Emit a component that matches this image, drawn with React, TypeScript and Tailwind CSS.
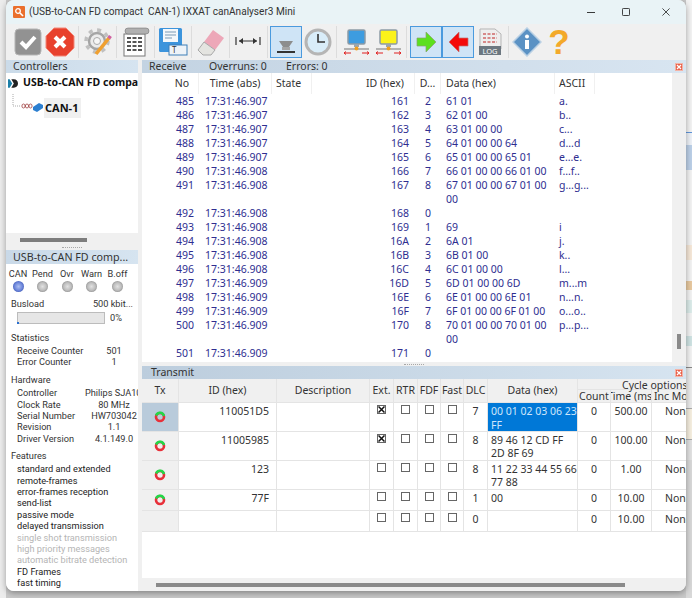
import React from 'react';

const Sep = () => <div className="w-px h-[32px] bg-[#dcdcdc] mx-[2.35px] shrink-0" />;

const ToolBtn = ({ active, children }: { active?: boolean; children: React.ReactNode }) => (
  <div className={`w-[32px] h-[32px] shrink-0 flex items-center justify-center ${active ? 'bg-[#cfe4f6] border border-[#4a9ade]' : ''}`}>
    {children}
  </div>
);

const Icon = ({ children }: { children: React.ReactNode }) => (
  <svg width="30" height="30" viewBox="0 0 30 30">{children}</svg>
);

const NetIcon = ({ face }: { face: string }) => (
  <Icon>
    <rect x="7" y="3" width="17" height="14" rx="1.5" fill={face} stroke="#8c9aa5" strokeWidth="1.5" />
    <rect x="13" y="17" width="5" height="3" fill="#9aa5ad" />
    <line x1="3" y1="22" x2="28" y2="22" stroke="#777" strokeWidth="1" />
    <circle cx="15.5" cy="21.5" r="2" fill="#f0a020" />
    <path d="M3 26h7M3 26l2-1.5M3 26l2 1.5M21 26h7M28 26l-2-1.5M28 26l-2 1.5" stroke="#e02020" strokeWidth="1" fill="none" />
  </Icon>
);

const Toolbar = () => (
  <div className="h-[36px] bg-[#f0f0f0] flex items-center pl-[6px] shrink-0">
    <ToolBtn>
      <Icon>
        <rect x="2" y="2" width="26" height="26" rx="4" fill="#929292" stroke="#b5b5b5" />
        <path d="M8 15l5 5 9-10" stroke="#fff" strokeWidth="4" fill="none" />
      </Icon>
    </ToolBtn>
    <ToolBtn>
      <Icon>
        <path d="M9 1h12l8 8v12l-8 8H9l-8-8V9z" fill="#e8412d" stroke="#f3897a" strokeWidth="1" />
        <path d="M10 10l10 10M20 10L10 20" stroke="#fff" strokeWidth="4" />
      </Icon>
    </ToolBtn>
    <Sep />
    <ToolBtn>
      <Icon>
        <circle cx="14" cy="14" r="11" fill="none" stroke="#c0c0c0" strokeWidth="3.5" strokeDasharray="4 4.6" />
        <circle cx="14" cy="14" r="8" fill="#ececec" stroke="#a5a5a5" strokeWidth="2.5" />
        <circle cx="14" cy="14" r="3.5" fill="#f6f6f6" stroke="#aaa" />
        <path d="M26 11L13 27" stroke="#f0a030" strokeWidth="3.5" />
        <path d="M27.5 9l-1.8 2.4" stroke="#d060a0" strokeWidth="3.5" />
      </Icon>
    </ToolBtn>
    <Sep />
    <ToolBtn>
      <Icon>
        <rect x="4" y="7" width="21" height="22" fill="#fff" stroke="#777" />
        <rect x="5" y="1" width="24" height="6" rx="3" fill="#b0b0b0" stroke="#666" strokeWidth="0.5" />
        <path d="M7 11h15M7 15h15M7 19h15M7 23h15" stroke="#555" strokeWidth="2" strokeDasharray="4 1.5" />
      </Icon>
    </ToolBtn>
    <Sep />
    <ToolBtn>
      <Icon>
        <rect x="1" y="1" width="23" height="24" rx="1.5" fill="#3c94dc" />
        <rect x="5" y="2" width="15" height="13" fill="#f4f8fb" />
        <path d="M7 5h11M7 8h11M7 11h7" stroke="#7a9ab5" strokeWidth="1" />
        <rect x="11" y="18" width="18" height="10" fill="#eef3f8" stroke="#3c7fb8" />
        <text x="14" y="26" fontSize="8" fill="#333">T</text>
      </Icon>
    </ToolBtn>
    <Sep />
    <ToolBtn>
      <Icon>
        <path d="M17 3l11 8-9 12-11-8z" fill="#eda7b8" />
        <path d="M8 15l11 8-4 5H7l-5-5z" fill="#e4e4e0" stroke="#a8a8a8" strokeWidth="1" />
      </Icon>
    </ToolBtn>
    <Sep />
    <ToolBtn>
      <Icon>
        <path d="M3 10v8M27 10v8M6 14h18" stroke="#333" strokeWidth="1.2" fill="none" />
        <path d="M6 14l4-3v6zM24 14l-4-3v6z" fill="#333" />
      </Icon>
    </ToolBtn>
    <Sep />
    <ToolBtn active>
      <Icon>
        <path d="M8 14h14l-4 6h-6z" fill="#8d8d8d" />
        <rect x="11" y="20" width="8" height="3" fill="#a5a5a5" />
        <rect x="6" y="24" width="18" height="2" fill="#333" />
      </Icon>
    </ToolBtn>
    <ToolBtn>
      <Icon>
        <circle cx="15" cy="15" r="12" fill="#d9edf9" stroke="#b5b5b5" strokeWidth="3" />
        <path d="M15 7v8h7" stroke="#333" strokeWidth="1.6" fill="none" />
      </Icon>
    </ToolBtn>
    <Sep />
    <ToolBtn>
      <NetIcon face="#3d9ce0" />
    </ToolBtn>
    <ToolBtn>
      <NetIcon face="#fbf21a" />
    </ToolBtn>
    <Sep />
    <ToolBtn active>
      <Icon>
        <path d="M6 11h9V5l10 10-10 10v-6H6z" fill="#5ce01e" stroke="#8aa070" strokeWidth="0.7" />
      </Icon>
    </ToolBtn>
    <ToolBtn active>
      <Icon>
        <path d="M25 11h-9V5L6 15l10 10v-6h9z" fill="#f40a0a" stroke="#c07070" strokeWidth="0.7" />
      </Icon>
    </ToolBtn>
    <ToolBtn>
      <Icon>
        <path d="M5 2h15l6 5v15H5z" fill="#eeeeee" stroke="#b5b5b5" />
        <path d="M8 7h14M8 11h14M8 15h14" stroke="#d06868" strokeWidth="1.6" strokeDasharray="3 1.5" />
        <rect x="4" y="19" width="22" height="9" fill="#6c7780" />
        <text x="15" y="26.5" fontSize="7.5" fill="#fff" textAnchor="middle">LOG</text>
      </Icon>
    </ToolBtn>
    <Sep />
    <ToolBtn>
      <Icon>
        <path d="M15 1l14 14-14 14L1 15z" fill="#5b92c4" stroke="#b9d0e4" strokeWidth="1.5" />
        <circle cx="15" cy="9.5" r="2" fill="#fff" />
        <rect x="13" y="13" width="4" height="9" fill="#fff" />
      </Icon>
    </ToolBtn>
    <ToolBtn>
      <Icon>
        <text x="15" y="27" fontSize="35" fontWeight="700" fill="#f3a92a" textAnchor="middle" fontFamily="Liberation Sans">?</text>
      </Icon>
    </ToolBtn>
  </div>
);

const CloseMark = () => (
  <div className="w-[8px] h-[8px] bg-[#e8604a] border border-[#f3b3a6] flex items-center justify-center shrink-0">
    <svg width="6" height="6" viewBox="0 0 6 6">
      <path d="M1 1l4 4M5 1L1 5" stroke="#fff" strokeWidth="1.2" />
    </svg>
  </div>
);

const Grip = () => <div className="w-[20px] h-px border-t border-dotted border-[#a8a8a8]" />;

const rxRows = [
  ['485', '17:31:46.907', '161', '2', '61 01', 'a.'],
  ['486', '17:31:46.907', '162', '3', '62 01 00', 'b..'],
  ['487', '17:31:46.907', '163', '4', '63 01 00 00', 'c...'],
  ['488', '17:31:46.907', '164', '5', '64 01 00 00 64', 'd...d'],
  ['489', '17:31:46.907', '165', '6', '65 01 00 00 65 01', 'e...e.'],
  ['490', '17:31:46.908', '166', '7', '66 01 00 00 66 01 00', 'f...f..'],
  ['491', '17:31:46.908', '167', '8', '67 01 00 00 67 01 00\n00', 'g...g...'],
  ['492', '17:31:46.908', '168', '0', '', ''],
  ['493', '17:31:46.908', '169', '1', '69', 'i'],
  ['494', '17:31:46.908', '16A', '2', '6A 01', 'j.'],
  ['495', '17:31:46.908', '16B', '3', '6B 01 00', 'k..'],
  ['496', '17:31:46.908', '16C', '4', '6C 01 00 00', 'l...'],
  ['497', '17:31:46.909', '16D', '5', '6D 01 00 00 6D', 'm...m'],
  ['498', '17:31:46.909', '16E', '6', '6E 01 00 00 6E 01', 'n...n.'],
  ['499', '17:31:46.909', '16F', '7', '6F 01 00 00 6F 01 00', 'o...o..'],
  ['500', '17:31:46.909', '170', '8', '70 01 00 00 70 01 00\n00', 'p...p...'],
  ['501', '17:31:46.909', '171', '0', '', ''],
];

const rxCols = 'grid grid-cols-[57px_73px_40px_103px_26px_114px_40px]';

const ReceivePanel = () => (
  <div className="h-[302px] flex flex-col shrink-0">
    <div className="h-[13px] bg-linear-to-r from-[#c3d3e2] to-[#d8e5f1] flex items-center pl-[7px] pr-[3px] text-[#333] shrink-0">
      <span className="w-[60px]">Receive</span>
      <span className="w-[77px]">Overruns: 0</span>
      <span className="flex-1">Errors: 0</span>
      <CloseMark />
    </div>
    <div className="flex flex-1 min-h-0">
      <div className="flex-1 bg-white overflow-hidden text-[#2e2e90]">
        <div className={`${rxCols} h-[21px] items-center text-[#333]`}>
          <span className="text-right pr-[9px] h-full leading-[21px] border-r border-[#f0f0f0]">No</span>
          <span className="text-center h-full leading-[21px] border-r border-[#f0f0f0]">Time (abs)</span>
          <span className="pl-[4px] h-full leading-[21px] border-r border-[#f0f0f0]">State</span>
          <span className="text-right pr-[10px] h-full leading-[21px] border-r border-[#f0f0f0]">ID (hex)</span>
          <span className="text-center h-full leading-[21px] border-r border-[#f0f0f0]">D...</span>
          <span className="pl-[5px] h-full leading-[21px] border-r border-[#f0f0f0]">Data (hex)</span>
          <span className="pl-[4px] h-full leading-[21px] border-r border-[#f0f0f0]">ASCII</span>
        </div>
        {rxRows.map((r) => (
          <div key={r[0]} className={`${rxCols} leading-[14px]`}>
            <span className="text-right pr-[5px]">{r[0]}</span>
            <span className="pl-[6px] whitespace-nowrap">{r[1]}</span>
            <span />
            <span className="text-right pr-[6px]">{r[2]}</span>
            <span className="text-center">{r[3]}</span>
            <span className="pl-[5px] whitespace-pre">{r[4]}</span>
            <span className="pl-[4px] whitespace-nowrap">{r[5]}</span>
          </div>
        ))}
      </div>
      <div className="w-[14px] bg-[#f0f0f0] flex flex-col items-center shrink-0">
        <div className="w-[4px] h-[15px] bg-[#8a8a8a] mt-[261px]" />
      </div>
    </div>
  </div>
);

const Check = ({ on }: { on?: boolean }) => (
  <div className="flex justify-center pt-[2px]">
    <div className="w-[9px] h-[9px] border border-[#666] bg-white flex items-center justify-center">
      {on && (
        <svg width="7" height="7" viewBox="0 0 7 7">
          <path d="M0.5 0.5l6 6M6.5 0.5l-6 6" stroke="#111" strokeWidth="1.5" />
        </svg>
      )}
    </div>
  </div>
);

const TxIcon = () => (
  <svg width="12" height="12" viewBox="0 0 12 12">
    <circle cx="6" cy="6" r="4" fill="none" stroke="#e8303a" strokeWidth="2.6" />
    <path d="M2.2 4.5A4 4 0 0 1 9.9 5" fill="none" stroke="#22d848" strokeWidth="2.6" />
  </svg>
);

const txCols = 'grid grid-cols-[37px_98px_93px_24px_24px_23px_23px_24px_90px_33px_41px_34px]';

const txRows = [
  { h: 'h-[28.7px]', id: '110051D5', ext: true, dlc: '7', data: '00 01 02 03 06 23\nFF', time: '500.00', sel: true, tx: true },
  { h: 'h-[29px]', id: '11005985', ext: true, dlc: '8', data: '89 46 12 CD FF\n2D 8F 69', time: '100.00', tx: true },
  { h: 'h-[29px]', id: '123', dlc: '8', data: '11 22 33 44 55 66\n77 88', time: '1.00', tx: true },
  { h: 'h-[21px]', id: '77F', dlc: '1', data: '00', time: '10.00', tx: true },
  { h: 'h-[21px]', id: '', dlc: '0', data: '', time: '10.00' },
];

const cell = 'border-r border-b border-[#e4e4e4] overflow-hidden';
const head = 'border-r border-[#e4e4e4] flex items-center justify-center';

const TransmitPanel = () => (
  <div className="flex-1 min-h-0 flex flex-col">
    <div className="h-[13px] bg-linear-to-r from-[#bccddd] to-[#d6e4f0] flex items-center justify-between pl-[9px] pr-[3px] text-[#333] shrink-0">
      <span>Transmit</span>
      <CloseMark />
    </div>
    <div className="flex-1 bg-white overflow-hidden text-[#333]">
      <div className={`${txCols} h-[24px] bg-[#f0f0f0] border-b border-[#e4e4e4]`}>
        <span className={head}>Tx</span>
        <span className={head}>ID (hex)</span>
        <span className={head}>Description</span>
        <span className={head}>Ext.</span>
        <span className={head}>RTR</span>
        <span className={head}>FDF</span>
        <span className={head}>Fast</span>
        <span className={head}>DLC</span>
        <span className={head}>Data (hex)</span>
        <div className="col-span-3 flex flex-col min-w-0 overflow-hidden">
          <span className="h-[11px] leading-[12px] whitespace-nowrap border-b border-[#e4e4e4] pl-[44px]">Cycle options</span>
          <div className="grid grid-cols-[33px_41px_34px] flex-1">
            <span className="text-center border-r border-[#e4e4e4] leading-[12px]">Count</span>
            <span className="border-r border-[#e4e4e4] leading-[12px] whitespace-nowrap overflow-hidden indent-[-4px]">Time (ms)</span>
            <span className="leading-[12px] whitespace-nowrap overflow-hidden pl-[2px]">Inc Mode</span>
          </div>
        </div>
      </div>
      {txRows.map((r, i) => (
        <div key={i} className={`${txCols} ${r.h} leading-[13.5px]`}>
          <div className={`${cell} ${r.sel ? 'bg-[#b9cbdb]' : 'bg-[#f0f0f0]'} flex items-center justify-center`}>{r.tx && <TxIcon />}</div>
          <div className={`${cell} text-right pr-[7px] pt-[2px]`}>{r.id}</div>
          <div className={cell} />
          <div className={cell}><Check on={r.ext} /></div>
          <div className={cell}><Check /></div>
          <div className={cell}><Check /></div>
          <div className={cell}><Check /></div>
          <div className={`${cell} text-center pt-[2px]`}>{r.dlc}</div>
          <div className={`${cell} pl-[3px] pt-[2px] whitespace-pre ${r.sel ? 'bg-[#0078d7] text-[#cfe6fb]' : ''}`}>{r.data}</div>
          <div className={`${cell} text-center pt-[2px]`}>0</div>
          <div className={`${cell} text-center pt-[2px]`}>{r.time}</div>
          <div className={`${cell} border-r-0 whitespace-nowrap pt-[2px] pl-[13px]`}>None</div>
        </div>
      ))}
    </div>
    <div className="h-[13px] bg-[#f0f0f0] flex items-center pl-[14px] shrink-0">
      <div className="w-[469px] h-[4px] bg-[#8a8a8a]" />
    </div>
  </div>
);

const leds = ['CAN', 'Pend', 'Ovr', 'Warn', 'B.off'];

const Led = ({ on }: { on?: boolean }) => (
  <div className={`w-[11px] h-[11px] rounded-full bg-radial ${on ? 'from-[#aebff0] via-[#6f88dc] to-[#23399c]' : 'from-[#e2e2e2] via-[#bdbdbd] to-[#6c6c6c]'}`} />
);

const Row = ({ label, value }: { label: string; value: string }) => (
  <div className="grid grid-cols-[68px_58px] h-[11.4px] leading-[11.4px] pl-[11px] whitespace-nowrap">
    <span>{label}</span>
    <span className="text-center">{value}</span>
  </div>
);

const features = [
  ['standard and extended', false],
  ['remote-frames', false],
  ['error-frames reception', false],
  ['send-list', false],
  ['passive mode', false],
  ['delayed transmission', false],
  ['single shot transmission', true],
  ['high priority messages', true],
  ['automatic bitrate detection', true],
  ['FD Frames', false],
  ['fast timing', false],
] as const;

const LeftColumn = () => (
  <div className="w-[132px] shrink-0 flex flex-col overflow-hidden">
    <div className="h-[13px] bg-linear-to-r from-[#cbdbe9] to-[#d6e4f0] pl-[7px] flex items-center text-[#333] shrink-0">Controllers</div>
    <div className="h-[160px] bg-white shrink-0 text-[#111] font-bold">
      <div className="h-[20px] flex items-center whitespace-nowrap overflow-hidden">
        <svg className="ml-[2px] mr-[5px] shrink-0" width="10" height="11" viewBox="0 0 12 12">
          <path d="M0 1h2l3 5-3 5H0z" fill="#1c7fa8" />
          <path d="M4 1h3c3 0 5 2 5 5s-2 5-5 5H4l3-5z" fill="#222" />
        </svg>
        <span className="text-[10.5px]">USB-to-CAN FD compact</span>
      </div>
      <div className="flex items-center h-[20px] ml-[7px] mt-[5px]">
        <svg className="shrink-0 overflow-visible" width="31" height="20" viewBox="0 0 31 20">
          <path d="M0 -4v12h8" fill="none" stroke="#aaa" strokeDasharray="1 1" />
          <ellipse cx="10.5" cy="8" rx="1.6" ry="2" fill="none" stroke="#a04040" strokeWidth="0.8" />
          <ellipse cx="14" cy="8" rx="1.6" ry="2" fill="none" stroke="#a04040" strokeWidth="0.8" />
          <ellipse cx="17.5" cy="8" rx="1.6" ry="2" fill="none" stroke="#a04040" strokeWidth="0.8" />
          <path d="M20 9l6-4 4 2v3l-6 4-4-2z" fill="#2c7fd0" />
        </svg>
        <span className="bg-[#f0f0f0] h-[20px] leading-[20px] pl-[1px] pr-[3px] text-[11px]">CAN-1</span>
      </div>
    </div>
    <div className="h-[12px] bg-[#f0f0f0] flex items-end pl-[14px] pb-[3px] shrink-0">
      <div className="w-[67px] h-[4px] bg-[#7d7d7d]" />
    </div>
    <div className="h-[5px] bg-[#f0f0f0] flex items-center justify-center shrink-0"><Grip /></div>
    <div className="h-[14px] bg-linear-to-r from-[#c9d9e8] to-[#d6e4f0] pl-[7px] leading-[14px] text-[10.7px] text-[#333] shrink-0">USB-to-CAN FD comp...</div>
    <div className="flex-1 bg-white text-[#333] font-['Roboto',sans-serif] text-[9.2px] overflow-hidden">
      <div className="grid grid-cols-[24px_25px_24px_25px_27px] mt-[4px] text-center leading-[12px]">
        {leds.map((l) => <span key={l}>{l}</span>)}
      </div>
      <div className="grid grid-cols-[24px_25px_24px_25px_27px] h-[13px] justify-items-center items-center">
        {leds.map((l) => <Led key={l} on={l === 'CAN'} />)}
      </div>
      <div className="flex justify-between pl-[5px] pr-[5px] mt-[5px] leading-[12px]">
        <span>Busload</span>
        <span>500 kbit...</span>
      </div>
      <div className="flex items-center mt-[2px] h-[12px] pl-[11px] relative">
        <div className="w-[88px] h-[12px] bg-[#e6e6e6] border border-[#bcbcbc]" />
        <span className="ml-[5px]">0%</span>
        <div className="absolute left-[11px] bottom-0 w-[2px] h-[2px] bg-[#2a6fd0]" />
      </div>
      <div className="pl-[5px] mt-[8px] leading-[12px]">Statistics</div>
      <div className="mt-[1px]">
        <Row label="Receive Counter" value="501" />
        <Row label="Error Counter" value="1" />
      </div>
      <div className="pl-[5px] mt-[6px] leading-[12px]">Hardware</div>
      <div className="mt-[1.5px]">
        <Row label="Controller" value="Philips SJA1000" />
        <Row label="Clock Rate" value="80 MHz" />
        <Row label="Serial Number" value="HW703042" />
        <Row label="Revision" value="1.1" />
        <Row label="Driver Version" value="4.1.149.0" />
      </div>
      <div className="pl-[5px] mt-[5.5px] leading-[12px]">Features</div>
      <div className="mt-[1.5px] pl-[11px]">
        {features.map(([f, off]) => (
          <div key={f} className={`h-[11.4px] leading-[11.4px] whitespace-nowrap ${off ? 'text-[#b5b5b5]' : 'text-[#222]'}`}>{f}</div>
        ))}
      </div>
    </div>
  </div>
);

const RightStrip = () => (
  <div className="w-[6px] h-full flex flex-col shrink-0 bg-[#f3f3f3]">
    <div className="h-[132px]" />
    <div className="h-px bg-[#5f96dc]" />
    <div className="h-[12px] bg-[#eef2f8]" />
    <div className="h-[25px] bg-[#bcd0e8]" />
    <div className="h-[75px]" />
    <div className="h-[15px] bg-[#f6e8d8]" />
    <div className="h-[21px]" />
    <div className="h-[9px] bg-[#e8c9a0]" />
    <div className="h-[10px]" />
    <div className="h-[13px] bg-[#dcecea]" />
    <div className="h-[23px]" />
    <div className="h-[10px] bg-[#cfe3e3]" />
    <div className="h-[21px]" />
    <div className="h-px bg-[#888]" />
    <div className="h-[40px] bg-[#ececec]" />
    <div className="h-px bg-[#aaa]" />
    <div className="h-[30px] bg-[#f6efe0]" />
    <div className="h-px bg-[#aaa]" />
    <div className="h-[20px] bg-[#e2e2e2]" />
    <div className="flex-1 bg-[#d8d8d8]" />
  </div>
);

export default function App() {
  return (
    <div className="w-[692px] h-[598px] overflow-hidden bg-[#c9c9c9] font-['Noto_Sans','Liberation_Sans',sans-serif] text-[10.5px]">
      <div className="flex h-[598px]">
        <div className="w-[6px] h-full bg-[#ececec] shrink-0" />
        <div className="w-[680px] h-[591px] shrink-0 rounded-b-lg rounded-t-lg overflow-hidden flex flex-col bg-[#f0f0f0] shadow-[0_2px_6px_rgba(0,0,0,0.35)] relative">
          <div className="h-[24px] bg-[#e9f3f6] flex items-center shrink-0 pl-[7px] font-['Roboto',sans-serif] text-[10.1px] text-[#333]">
            <svg width="12" height="12" viewBox="0 0 12 12" className="mr-[4px]">
              <rect width="12" height="12" rx="1" fill="#ea6f2c" />
              <circle cx="5" cy="5" r="2.3" fill="none" stroke="#fff" strokeWidth="1.3" />
              <path d="M7 7l3 3" stroke="#fff" strokeWidth="1.6" />
            </svg>
            <span className="whitespace-pre">(USB-to-CAN FD compact  CAN-1) IXXAT canAnalyser3 Mini</span>
            <div className="ml-auto flex items-center pr-[16px]">
              <svg className="mr-[27px]" width="8" height="9" viewBox="0 0 9 9"><path d="M0 4.5h9" stroke="#222" strokeWidth="1" /></svg>
              <svg className="mr-[32px]" width="8" height="8" viewBox="0 0 9 9"><rect x="0.5" y="0.5" width="8" height="8" rx="1" fill="none" stroke="#222" /></svg>
              <svg width="8" height="8" viewBox="0 0 9 9"><path d="M0.5 0.5l8 8M8.5 0.5l-8 8" stroke="#222" strokeWidth="0.9" /></svg>
            </div>
          </div>
          <Toolbar />
          <div className="flex flex-1 min-h-0">
            <LeftColumn />
            <div className="w-[4px] bg-[#f0f0f0] shrink-0" />
            <div className="flex-1 min-w-0 flex flex-col">
              <ReceivePanel />
              <div className="h-[4px] bg-[#f0f0f0] flex justify-center items-center shrink-0"><Grip /></div>
              <TransmitPanel />
            </div>
          </div>
        </div>
        <RightStrip />
      </div>
    </div>
  );
}
